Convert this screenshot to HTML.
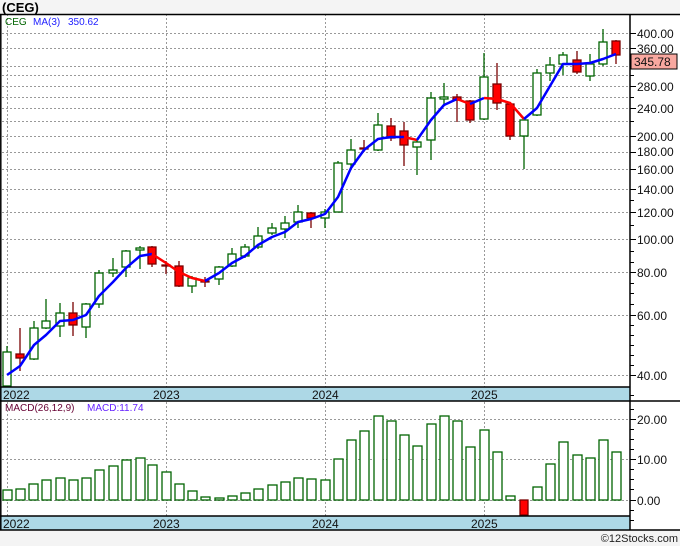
<!DOCTYPE html>
<html><head><meta charset="utf-8"><style>
html,body{margin:0;padding:0;background:#f4f4f4;width:680px;height:546px;overflow:hidden}
svg{display:block;font-family:"Liberation Sans","DejaVu Sans",sans-serif}
</style></head><body>
<svg width="680" height="546" viewBox="0 0 680 546" xmlns="http://www.w3.org/2000/svg">
<rect x="0" y="0" width="680" height="546" fill="#f4f4f4"/>
<text x="2" y="12" font-size="13" font-weight="bold" fill="#000">(CEG)</text>
<rect x="0" y="14" width="680" height="516" fill="#fff"/>
<g stroke="#999" stroke-width="1" stroke-dasharray="2,2">
<line x1="2" x2="629" y1="33.5" y2="33.5"/><line x1="2" x2="629" y1="48.5" y2="48.5"/>
<line x1="2" x2="629" y1="66.5" y2="66.5"/><line x1="2" x2="629" y1="75.5" y2="75.5"/>
<line x1="2" x2="629" y1="86.5" y2="86.5"/><line x1="2" x2="629" y1="97.5" y2="97.5"/>
<line x1="2" x2="629" y1="108.5" y2="108.5"/><line x1="2" x2="629" y1="121.5" y2="121.5"/>
<line x1="2" x2="629" y1="136.5" y2="136.5"/><line x1="2" x2="629" y1="152.5" y2="152.5"/>
<line x1="2" x2="629" y1="169.5" y2="169.5"/><line x1="2" x2="629" y1="189.5" y2="189.5"/>
<line x1="2" x2="629" y1="212.5" y2="212.5"/><line x1="2" x2="629" y1="239.5" y2="239.5"/>
<line x1="2" x2="629" y1="272.5" y2="272.5"/><line x1="2" x2="629" y1="315.5" y2="315.5"/>
<line x1="2" x2="629" y1="375.5" y2="375.5"/>
<line x1="2" x2="629" y1="419.5" y2="419.5"/><line x1="2" x2="629" y1="459.5" y2="459.5"/><line x1="2" x2="629" y1="500.5" y2="500.5"/>
<line x1="7.5" x2="7.5" y1="14" y2="530"/><line x1="166.5" x2="166.5" y1="14" y2="530"/>
<line x1="325.5" x2="325.5" y1="14" y2="530"/><line x1="484.5" x2="484.5" y1="14" y2="530"/>
</g>
<g stroke-width="1.3">
<g stroke="#006400" fill="#fff">
<line x1="7" x2="7" y1="346" y2="386"/><rect x="3" y="352" width="8" height="34"/>
<line x1="34" x2="34" y1="321" y2="360"/><rect x="30" y="328" width="8" height="31"/>
<line x1="46" x2="46" y1="299" y2="329"/><rect x="42" y="321" width="8" height="7"/>
<line x1="60" x2="60" y1="303" y2="337"/><rect x="56" y="313" width="8" height="13"/>
<line x1="86" x2="86" y1="303" y2="338"/><rect x="82" y="304" width="8" height="23"/>
<line x1="99" x2="99" y1="270" y2="308"/><rect x="95" y="273" width="8" height="31"/>
<line x1="113" x2="113" y1="258" y2="277"/><rect x="109" y="270" width="8" height="3"/>
<line x1="126" x2="126" y1="250" y2="277"/><rect x="122" y="251" width="8" height="16"/>
<line x1="140" x2="140" y1="246" y2="269"/><rect x="136" y="248" width="8" height="2"/>
<line x1="192" x2="192" y1="276" y2="293"/><rect x="188" y="278" width="8" height="8"/>
<line x1="219" x2="219" y1="266" y2="285"/><rect x="215" y="267" width="8" height="12"/>
<line x1="232" x2="232" y1="248" y2="267"/><rect x="228" y="254" width="8" height="12"/>
<line x1="245" x2="245" y1="244" y2="258"/><rect x="241" y="247" width="8" height="9"/>
<line x1="258" x2="258" y1="227" y2="249"/><rect x="254" y="236" width="8" height="11"/>
<line x1="272" x2="272" y1="223" y2="235"/><rect x="268" y="228" width="8" height="5"/>
<line x1="285" x2="285" y1="216" y2="238"/><rect x="281" y="223" width="8" height="6"/>
<line x1="298" x2="298" y1="205" y2="228"/><rect x="294" y="212" width="8" height="10"/>
<line x1="325" x2="325" y1="209" y2="228"/><rect x="321" y="212" width="8" height="6"/>
<line x1="338" x2="338" y1="161" y2="212"/><rect x="334" y="163" width="8" height="49"/>
<line x1="351" x2="351" y1="139" y2="169"/><rect x="347" y="150" width="8" height="14"/>
<line x1="378" x2="378" y1="113" y2="151"/><rect x="374" y="125" width="8" height="25"/>
<line x1="417" x2="417" y1="140" y2="175"/><rect x="413" y="142" width="8" height="5"/>
<line x1="431" x2="431" y1="92" y2="160"/><rect x="427" y="98" width="8" height="42"/>
<line x1="444" x2="444" y1="83" y2="105"/><rect x="440" y="97" width="8" height="2"/>
<line x1="484" x2="484" y1="53" y2="120"/><rect x="480" y="77" width="8" height="42"/>
<line x1="524" x2="524" y1="120" y2="169"/><rect x="520" y="120" width="8" height="16"/>
<line x1="537" x2="537" y1="69" y2="116"/><rect x="533" y="73" width="8" height="42"/>
<line x1="550" x2="550" y1="57" y2="81"/><rect x="546" y="65" width="8" height="8"/>
<line x1="563" x2="563" y1="52" y2="75"/><rect x="559" y="55" width="8" height="9"/>
<line x1="590" x2="590" y1="54" y2="81"/><rect x="586" y="64" width="8" height="12"/>
<line x1="603" x2="603" y1="29" y2="66"/><rect x="599" y="42" width="8" height="22"/>
</g>
<g stroke="#7a0000" fill="#ff0000">
<line x1="20" x2="20" y1="328" y2="371"/><rect x="16" y="354" width="8" height="4"/>
<line x1="73" x2="73" y1="302" y2="336"/><rect x="69" y="313" width="8" height="12"/>
<line x1="152" x2="152" y1="246" y2="267"/><rect x="148" y="247" width="8" height="17"/>
<line x1="166" x2="166" y1="261" y2="274"/><rect x="162" y="265" width="8" height="1"/>
<line x1="179" x2="179" y1="261" y2="287"/><rect x="175" y="266" width="8" height="20"/>
<line x1="205" x2="205" y1="277" y2="287"/><rect x="201" y="281" width="8" height="1"/>
<line x1="311" x2="311" y1="212" y2="228"/><rect x="307" y="213" width="8" height="5"/>
<line x1="364" x2="364" y1="140" y2="152"/><rect x="360" y="148" width="8" height="1"/>
<line x1="391" x2="391" y1="118" y2="141"/><rect x="387" y="126" width="8" height="12"/>
<line x1="404" x2="404" y1="122" y2="166"/><rect x="400" y="131" width="8" height="14"/>
<line x1="457" x2="457" y1="94" y2="122"/><rect x="453" y="97" width="8" height="3"/>
<line x1="470" x2="470" y1="100" y2="123"/><rect x="466" y="101" width="8" height="19"/>
<line x1="497" x2="497" y1="63" y2="110"/><rect x="493" y="84" width="8" height="19"/>
<line x1="510" x2="510" y1="103" y2="140"/><rect x="506" y="104" width="8" height="32"/>
<line x1="577" x2="577" y1="51" y2="74"/><rect x="573" y="60" width="8" height="12"/>
<line x1="616" x2="616" y1="40" y2="64"/><rect x="612" y="41" width="8" height="14"/>
</g>
</g>
<g fill="none" stroke-width="2.5" stroke-linejoin="round">
<polyline stroke="#0000ff" points="7,375 20,366 34,345 46,335 60,321 73,320 86,315 99,296 113,282 126,268 140,256 152,254"/>
<polyline stroke="#ff0000" points="152,254 166,263 179,272 192,278 205,281"/>
<polyline stroke="#0000ff" points="205,281 219,273 232,263 245,256 258,245 272,237 285,232 298,222 311,219 325,214 338,197 351,168 364,150 378,139 391,137 404,137"/>
<polyline stroke="#ff0000" points="404,137 417,140"/>
<polyline stroke="#0000ff" points="417,140 431,120 444,105 457,99"/>
<polyline stroke="#ff0000" points="457,99 470,104"/>
<polyline stroke="#0000ff" points="470,104 484,98"/>
<polyline stroke="#ff0000" points="484,98 497,99 510,103 524,119"/>
<polyline stroke="#0000ff" points="524,119 537,108 550,86 563,64 577,64 590,63 603,59 616,54"/>
</g>
<text x="5" y="25" font-size="10" fill="#006400">CEG</text>
<text x="33" y="25" font-size="10" fill="#2222ff">MA(3)</text>
<text x="68" y="25" font-size="10" fill="#2222ff">350.62</text>
<g stroke="#006400" stroke-width="1.3" fill="#fff">
<rect x="3" y="490" width="9" height="10"/><rect x="16" y="489" width="9" height="11"/>
<rect x="29" y="484" width="9" height="16"/><rect x="42" y="480" width="9" height="20"/>
<rect x="56" y="478" width="9" height="22"/><rect x="69" y="480" width="9" height="20"/>
<rect x="82" y="478" width="9" height="22"/><rect x="95" y="470" width="9" height="30"/>
<rect x="109" y="466" width="9" height="34"/><rect x="122" y="460" width="9" height="40"/>
<rect x="136" y="458" width="9" height="42"/><rect x="148" y="465" width="9" height="35"/>
<rect x="162" y="472" width="9" height="28"/><rect x="175" y="484" width="9" height="16"/>
<rect x="188" y="491" width="9" height="9"/><rect x="201" y="497" width="9" height="3"/>
<rect x="215" y="498" width="9" height="2"/><rect x="228" y="496" width="9" height="4"/>
<rect x="241" y="493" width="9" height="7"/><rect x="254" y="489" width="9" height="11"/>
<rect x="268" y="485" width="9" height="15"/><rect x="281" y="482" width="9" height="18"/>
<rect x="294" y="478" width="9" height="22"/><rect x="307" y="479" width="9" height="21"/>
<rect x="321" y="480" width="9" height="20"/><rect x="334" y="459" width="9" height="41"/>
<rect x="347" y="440" width="9" height="60"/><rect x="360" y="431" width="9" height="69"/>
<rect x="374" y="416" width="9" height="84"/><rect x="387" y="421" width="9" height="79"/>
<rect x="400" y="435" width="9" height="65"/><rect x="413" y="446" width="9" height="54"/>
<rect x="427" y="424" width="9" height="76"/><rect x="440" y="416" width="9" height="84"/>
<rect x="453" y="421" width="9" height="79"/><rect x="466" y="447" width="9" height="53"/>
<rect x="480" y="430" width="9" height="70"/><rect x="493" y="452" width="9" height="48"/>
<rect x="506" y="496" width="9" height="4"/>
<rect x="533" y="487" width="9" height="13"/><rect x="546" y="464" width="9" height="36"/>
<rect x="559" y="442" width="9" height="58"/><rect x="573" y="455" width="9" height="45"/>
<rect x="586" y="458" width="9" height="42"/><rect x="599" y="440" width="9" height="60"/>
<rect x="612" y="452" width="9" height="48"/>
</g>
<rect x="520" y="500" width="8" height="15" fill="#ff0000" stroke="#7a0000" stroke-width="1.3"/>
<text x="5" y="411" font-size="10" fill="#660033">MACD(26,12,9)</text>
<text x="87" y="411" font-size="10" fill="#6622ff">MACD:11.74</text>
<rect x="0" y="387" width="630" height="14" fill="#add8e6"/>
<rect x="0" y="516" width="630" height="14" fill="#add8e6"/>
<g stroke="#000" stroke-width="1.5" fill="none">
<line x1="0" x2="630" y1="387" y2="387"/><line x1="0" x2="680" y1="401" y2="401"/>
<line x1="0" x2="630" y1="516" y2="516"/><line x1="0" x2="680" y1="530" y2="530"/>
<line x1="0" x2="680" y1="14.5" y2="14.5"/>
<line x1="0.8" x2="0.8" y1="14" y2="530"/>
<line x1="630" x2="630" y1="14" y2="530"/>
</g>
<g font-size="12" fill="#111">
<text x="3" y="399">2022</text><text x="153" y="399">2023</text><text x="312" y="399">2024</text><text x="471" y="399">2025</text>
<text x="3" y="528">2022</text><text x="153" y="528">2023</text><text x="312" y="528">2024</text><text x="471" y="528">2025</text>
</g>
<g stroke="#000" stroke-width="1">
<line x1="630" x2="636" y1="33.5" y2="33.5"/><line x1="630" x2="636" y1="48.5" y2="48.5"/>
<line x1="630" x2="634" y1="66.5" y2="66.5"/><line x1="630" x2="634" y1="75.5" y2="75.5"/>
<line x1="630" x2="636" y1="86.5" y2="86.5"/><line x1="630" x2="634" y1="97.5" y2="97.5"/>
<line x1="630" x2="636" y1="108.5" y2="108.5"/><line x1="630" x2="634" y1="121.5" y2="121.5"/>
<line x1="630" x2="636" y1="136.5" y2="136.5"/><line x1="630" x2="636" y1="152.5" y2="152.5"/>
<line x1="630" x2="636" y1="169.5" y2="169.5"/><line x1="630" x2="636" y1="189.5" y2="189.5"/>
<line x1="630" x2="636" y1="212.5" y2="212.5"/><line x1="630" x2="636" y1="239.5" y2="239.5"/>
<line x1="630" x2="636" y1="272.5" y2="272.5"/><line x1="630" x2="636" y1="315.5" y2="315.5"/>
<line x1="630" x2="636" y1="375.5" y2="375.5"/>
<line x1="630" x2="634" y1="200.5" y2="200.5"/><line x1="630" x2="634" y1="225.5" y2="225.5"/>
<line x1="630" x2="634" y1="251.5" y2="251.5"/><line x1="630" x2="634" y1="262.5" y2="262.5"/>
<line x1="630" x2="634" y1="283.5" y2="283.5"/><line x1="630" x2="634" y1="293.5" y2="293.5"/>
<line x1="630" x2="634" y1="304.5" y2="304.5"/><line x1="630" x2="634" y1="325.5" y2="325.5"/>
<line x1="630" x2="634" y1="335.5" y2="335.5"/><line x1="630" x2="634" y1="345.5" y2="345.5"/>
<line x1="630" x2="634" y1="355.5" y2="355.5"/><line x1="630" x2="634" y1="365.5" y2="365.5"/>
<line x1="630" x2="634" y1="395.5" y2="395.5"/>
<line x1="630" x2="636" y1="419.5" y2="419.5"/><line x1="630" x2="636" y1="459.5" y2="459.5"/><line x1="630" x2="636" y1="500.5" y2="500.5"/>
<line x1="630" x2="634" y1="409.5" y2="409.5"/><line x1="630" x2="634" y1="429.5" y2="429.5"/>
<line x1="630" x2="634" y1="439.5" y2="439.5"/><line x1="630" x2="634" y1="449.5" y2="449.5"/>
<line x1="630" x2="634" y1="469.5" y2="469.5"/><line x1="630" x2="634" y1="479.5" y2="479.5"/>
<line x1="630" x2="634" y1="489.5" y2="489.5"/><line x1="630" x2="634" y1="510.5" y2="510.5"/>
<line x1="630" x2="634" y1="520.5" y2="520.5"/>
</g>
<g font-size="12" fill="#111">
<text x="637" y="38">400.00</text><text x="637" y="53">360.00</text>
<text x="637" y="91">280.00</text><text x="637" y="113">240.00</text>
<text x="637" y="141">200.00</text><text x="637" y="156">180.00</text>
<text x="637" y="174">160.00</text><text x="637" y="194">140.00</text>
<text x="637" y="217">120.00</text><text x="637" y="244">100.00</text>
<text x="637" y="277">80.00</text><text x="637" y="320">60.00</text>
<text x="637" y="380">40.00</text>
<text x="637" y="424">20.00</text><text x="637" y="464">10.00</text><text x="637" y="505">0.00</text>
</g>
<rect x="631" y="54" width="46" height="15" fill="#f8a8a0" stroke="#000" stroke-width="1"/>
<text x="634" y="66" font-size="12" fill="#111">345.78</text>
<text x="678" y="542" font-size="11" fill="#222" text-anchor="end">©12Stocks.com</text>
</svg>
</body></html>
